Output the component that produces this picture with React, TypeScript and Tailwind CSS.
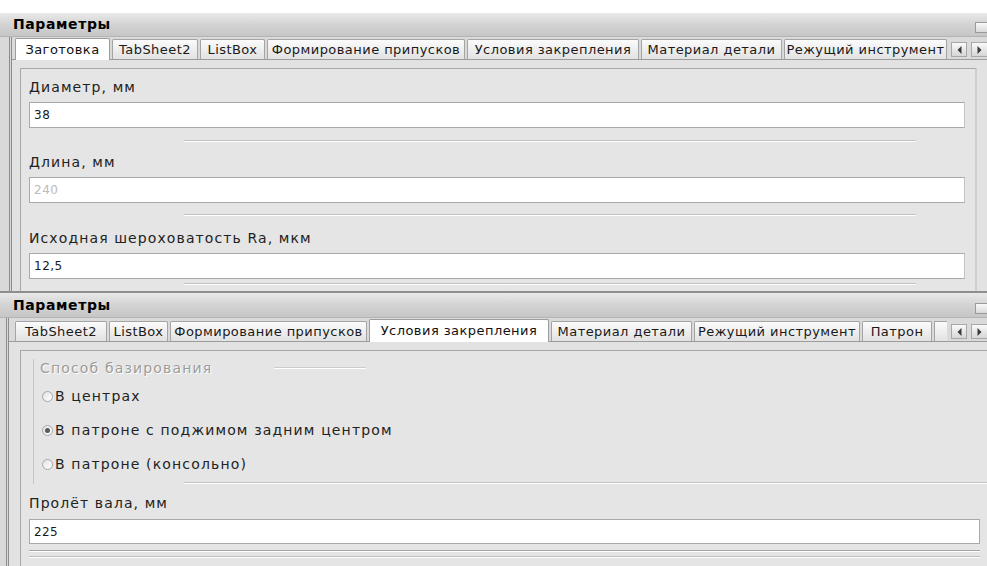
import React from "react";

type Tab = { label: string; w: number; active?: boolean };

const font = "font-['DejaVu_Sans',Verdana,sans-serif]";

function TitleBar({ h }: { h: string }) {
  return (
    <div
      className={`${h} relative flex items-center pl-[13px] bg-gradient-to-b from-[#e9e9e9] via-[#d3d3d3] to-[#c6c6c6] border-b border-[#b4b4b4]`}
    >
      <span className="text-[14px] font-bold text-black tracking-[0.6px]">Параметры</span>
      <div className="absolute right-0 bottom-[3px] w-[12px] h-[11px] border border-[#9a9a9a] border-r-0 bg-gradient-to-b from-[#fafafa] to-[#d8d8d8]" />
    </div>
  );
}

function Arrow({ dir, cut }: { dir: "l" | "r"; cut?: boolean }) {
  return (
    <div
      className={`w-[16px] h-[15px] border border-[#a8a8a8] ${cut ? "border-r-0" : ""} bg-gradient-to-b from-[#fafafa] to-[#d6d6d6] flex items-center justify-center`}
    >
      <svg width="5" height="8" viewBox="0 0 5 8">
        <path d={dir === "l" ? "M4.5 0 L0.5 4 L4.5 8 Z" : "M0.5 0 L4.5 4 L0.5 8 Z"} fill="#3a3a3a" />
      </svg>
    </div>
  );
}

function TabStrip({ tabs, lead, h, partial }: { tabs: Tab[]; lead: string; h: string; partial?: boolean }) {
  return (
    <div className={`flex items-end ${h} ${lead} border-b border-[#9c9c9c] bg-[#dadada]`}>
      {tabs.map((t) =>
        t.active ? (
          <div
            key={t.label}
            style={{ width: t.w }}
            className="h-full -mb-px mr-[2px] flex items-center justify-center border border-[#9c9c9c] border-b-0 bg-white text-[13px] text-[#111] tracking-[0.45px] whitespace-nowrap rounded-t-[2px] relative z-10"
          >
            {t.label}
          </div>
        ) : (
          <div
            key={t.label}
            style={{ width: t.w }}
            className="h-[20px] mr-[2px] flex items-center justify-center border border-[#a4a4a4] border-b-0 bg-gradient-to-b from-[#fbfbfb] to-[#e2e2e2] text-[13px] text-[#1a1a1a] tracking-[0.45px] whitespace-nowrap overflow-hidden rounded-t-[2px]"
          >
            {t.label}
          </div>
        )
      )}
      {partial && (
        <div className="h-[20px] w-[13px] border border-[#a4a4a4] border-b-0 border-r-0 bg-gradient-to-b from-[#fbfbfb] to-[#e2e2e2]" />
      )}
      <div className="ml-auto flex items-center gap-[4px] pb-[2px]">
        <Arrow dir="l" />
        <Arrow dir="r" cut />
      </div>
    </div>
  );
}

function Separator() {
  return <div className="ml-[163px] w-[732px] h-[2px] border-t border-[#c2c2c2] border-b border-b-white" />;
}

function Field({
  label,
  value,
  muted,
  labelH,
  gapAfter,
}: {
  label: string;
  value: string;
  muted?: boolean;
  labelH: string;
  gapAfter: string;
}) {
  return (
    <div className="flex flex-col">
      <div className={`${labelH} flex items-end pb-[6px] pl-[8px] text-[14px] leading-[17px] text-[#222] tracking-[1.1px]`}>
        {label}
      </div>
      <div
        className={`w-[936px] h-[26px] ml-[8px] flex items-center pl-[4px] bg-white border border-[#a9a9a9] border-r-[#c4c4c4] text-[12px] tracking-[0.5px] ${
          muted ? "text-[#bcbcbc]" : "text-[#1a1a1a]"
        }`}
      >
        {value}
      </div>
      <div className={`${gapAfter} flex items-center`}>
        <Separator />
      </div>
    </div>
  );
}

function Radio({ label, checked }: { label: string; checked?: boolean }) {
  return (
    <div className="flex items-center h-[34px] pl-[8px]">
      <div className="w-[11px] h-[11px] rounded-full border border-[#a2a8ae] bg-gradient-to-br from-[#e2e2e2] to-white flex items-center justify-center">
        {checked && <div className="w-[5px] h-[5px] rounded-full bg-[#5a5a5a]" />}
      </div>
      <span className="ml-[2px] text-[14px] text-[#222] tracking-[1.15px]">{label}</span>
    </div>
  );
}

export default function App() {
  const tabs1: Tab[] = [
    { label: "Заготовка", w: 95, active: true },
    { label: "TabSheet2", w: 86 },
    { label: "ListBox", w: 65 },
    { label: "Формирование припусков", w: 198 },
    { label: "Условия закрепления", w: 172 },
    { label: "Материал детали", w: 141 },
    { label: "Режущий инструмент", w: 163 },
  ];
  const tabs2: Tab[] = [
    { label: "TabSheet2", w: 92 },
    { label: "ListBox", w: 59 },
    { label: "Формирование припусков", w: 197 },
    { label: "Условия закрепления", w: 180, active: true },
    { label: "Материал детали", w: 141 },
    { label: "Режущий инструмент", w: 166 },
    { label: "Патрон", w: 70 },
  ];

  return (
    <div className={`w-[987px] h-[566px] overflow-hidden bg-white ${font}`}>
      <div className="h-[13px] bg-white" />

      {/* first parameters panel */}
      <div className="h-[280px] flex flex-col bg-[#d9d9d9] border-b-[2px] border-[#8e8e8e]">
        <TitleBar h="h-[24px]" />
        <div className="flex-1 flex ml-[9px] border-l-[3px] border-double border-[#8c8c8c]">
          <div className="flex-1 flex flex-col">
            <TabStrip tabs={tabs1} lead="pl-[3px]" h="h-[23px]" />
            <div className="flex-1 pl-[8px] pt-[8px] pr-[10px] bg-[#e2e2e2]">
              <div className="h-full border-l border-t border-r-2 border-[#a8a8a8] border-r-[#cfcfcf] bg-[#e5e5e5]">
                <Field label="Диаметр, мм" value="38" labelH="h-[33px]" gapAfter="h-[26px]" />
                <Field label="Длина, мм" value="240" muted labelH="h-[23px]" gapAfter="h-[24px]" />
                <Field label="Исходная шероховатость Ra, мкм" value="12,5" labelH="h-[26px]" gapAfter="h-[10px]" />
              </div>
            </div>
          </div>
        </div>
      </div>

      {/* second parameters panel */}
      <div className="h-[273px] flex flex-col bg-[#d9d9d9]">
        <TitleBar h="h-[25px]" />
        <div className="flex-1 flex ml-[6px] border-l-[3px] border-double border-[#8c8c8c]">
          <div className="flex-1 flex flex-col">
            <TabStrip tabs={tabs2} lead="pl-[6px]" h="h-[24px]" partial />
            <div className="flex-1 pl-[11px] pt-[8px] bg-[#e2e2e2]">
              <div className="h-full border-l border-t border-[#a8a8a8] bg-[#e5e5e5]">
                {/* group box */}
                <div className="ml-[12px] mt-[8px] h-[125px] border-l border-[#c6c6c6] relative">
                  <div className="flex items-center h-[18px]">
                    <span className="pl-[6px] text-[14px] text-[#9c9c9c] tracking-[1.15px] [text-shadow:1px_1px_0_#ffffff]">
                      Способ базирования
                    </span>
                    <div className="ml-[62px] w-[92px] h-[2px] border-t border-[#cccccc] border-b border-b-white" />
                  </div>
                  <div className="pt-[2px]">
                    <Radio label="В центрах" />
                    <Radio label="В патроне с поджимом задним центром" checked />
                    <Radio label="В патроне (консольно)" />
                  </div>
                  <div className="absolute bottom-0 left-[150px] right-0 h-[2px] border-t border-[#c2c2c2] border-b border-b-white" />
                </div>
                <div className="h-[35px] flex items-end pb-[7px] pl-[8px] text-[14px] leading-[17px] text-[#222] tracking-[1.1px]">
                  Пролёт вала, мм
                </div>
                <div className="w-[951px] h-[25px] ml-[8px] flex items-center pl-[4px] bg-white border border-[#a9a9a9] text-[12px] text-[#1a1a1a] tracking-[0.4px]">
                  225
                </div>
                <div className="mt-[6px] ml-[8px] w-[951px] h-[2px] border-t border-[#a4a4a4] border-b border-b-white" />
                <div className="mt-[4px] ml-[8px] w-[951px] h-[2px] border-t border-[#bdbdbd] border-b border-b-white" />
              </div>
            </div>
          </div>
        </div>
      </div>
    </div>
  );
}
